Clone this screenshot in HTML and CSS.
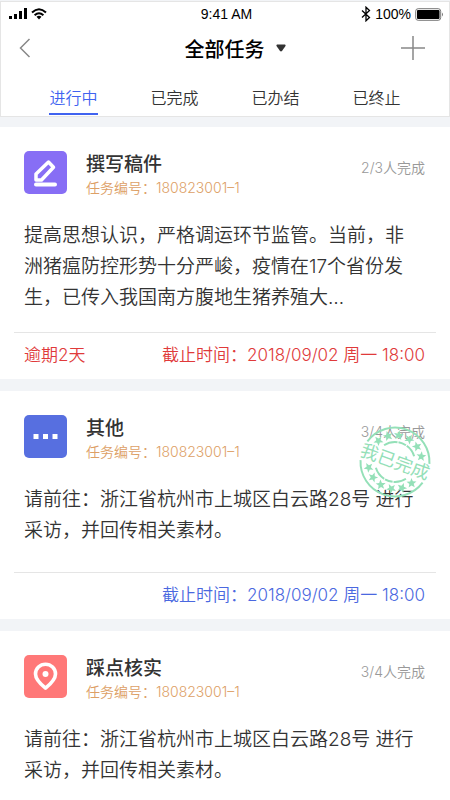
FILE: index.html
```html
<!DOCTYPE html>
<html lang="zh-CN">
<head>
<meta charset="utf-8">
<meta name="viewport" content="width=device-width, initial-scale=1">
<title>全部任务</title>
<link rel="stylesheet" href="styles.css">
</head>
<body>
<header class="top">
  <div class="status">
    <div class="status-left">
      <svg width="18" height="12" viewBox="0 0 18 12"><path d="M0 8h3v3H0zM5 6h3v5H5zM10 3h3v8h-3zM15 0h3v11h-3z"/></svg>
      <svg width="16" height="12" viewBox="0 0 16 12"><g fill="none" stroke="#000" stroke-width="2"><path d="M1 4.500Q8-2 15 4.500M3.600 7.200Q8 3.200 12.400 7.200"/></g><path d="M5.500 8.800Q8 6.800 10.500 8.800L8 11.400z"/></svg>
    </div>
    <span class="clock">9:41 AM</span>
    <div class="status-right">
      <svg width="10" height="16" viewBox="0 0 10 16" fill="none" stroke="#000" stroke-width="1.300"><path d="M1 4.500l7.500 7L5 14.800V1.200l3.500 3.300-7.500 7"/></svg>
      <span>100%</span>
      <svg width="29" height="13" viewBox="0 0 29 13"><rect x=".7" y=".7" width="25" height="11.600" rx="2.500" fill="none" stroke="#777" stroke-width="1"/><rect x="2" y="2" width="22.500" height="9" rx="1"/><path d="M27 4.500q2 2 0 4z" fill="#777"/></svg>
    </div>
  </div>
  <div class="nav">
    <button class="icon-btn" aria-label="返回"><svg width="12" height="20" viewBox="0 0 12 20" fill="none" stroke="#888" stroke-width="1.500"><path d="M10.500 1L1.500 10l9 9"/></svg></button>
    <button class="heading">全部任务<svg width="10" height="8" viewBox="0 0 10 8"><path d="M1 .5h8q1 .5.500 1.500L6 7q-1 .9-2 0L.5 2Q0 1 1 .5z" fill="#333"/></svg></button>
    <button class="icon-btn add" aria-label="新建"><svg width="24" height="24" viewBox="0 0 24 24" fill="none" stroke="#888" stroke-width="1.500"><path d="M12 0v24M0 12h24"/></svg></button>
  </div>
  <nav class="tabs">
    <a href="#" class="tab active">进行中</a>
    <a href="#" class="tab">已完成</a>
    <a href="#" class="tab">已办结</a>
    <a href="#" class="tab">已终止</a>
  </nav>
</header>
<main class="list">
  <article class="card">
    <div class="card-head">
      <svg class="badge" viewBox="0 0 43 43"><rect width="43" height="43" rx="5" fill="#876ef5"/><path d="M12 29v-6L24.500 11l5 5.200L17.500 29z" fill="none" stroke="#fff" stroke-width="3.500" stroke-linejoin="round"/><path d="M12 33.500h19" stroke="#fff" stroke-width="4" stroke-linecap="round"/></svg>
      <div class="names"><h2>撰写稿件</h2><p>任务编号：180823001–1</p></div>
      <span class="count">2/3人完成</span>
    </div>
    <p class="text">提高思想认识，严格调运环节监管。当前，非洲猪瘟防控形势十分严峻，疫情在17个省份发生，已传入我国南方腹地生猪养殖大…</p>
    <div class="foot late"><span>逾期2天</span><span>截止时间：2018/09/02 周一 18:00</span></div>
  </article>
  <article class="card">
    <div class="card-head">
      <svg class="badge" viewBox="0 0 43 43"><rect width="43" height="43" rx="5" fill="#576fe0"/><path d="M9.500 19h5v5h-5zM19 19h5v5h-5zM28.500 19h5v5h-5z" fill="#fff"/></svg>
      <div class="names"><h2>其他</h2><p>任务编号：180823001–1</p></div>
      <span class="count">3/4人完成</span>
    </div>
    <p class="text">请前往：浙江省杭州市上城区白云路28号 进行采访，并回传相关素材。</p>
    <div class="foot"><span>截止时间：2018/09/02 周一 18:00</span></div>
    <svg class="stamp" viewBox="-38 -38 76 76" role="img" aria-label="我已完成">
      <defs><path id="star" d="M0-5L1.400-1.600 5-1.500 2.200.8 3.100 4.300 0 2.300-3.100 4.300-2.200.8-5-1.500-1.400-1.600z"/></defs>
      <g transform="rotate(20)" fill="#94e0b8">
        <g fill="none" stroke="#94e0b8">
          <path d="M-33-10A34.500 34.500 0 0 1 33-10M-33 10A34.500 34.500 0 0 0 33 10" stroke-width="2"/>
          <path d="M-16-12A20 20 0 0 1 16-12M-16 12A20 20 0 0 0 16 12" stroke-width="2" stroke-dasharray="14 1 8 1"/>
        </g>
        <g id="stars">
          <use href="#star" transform="rotate(-58) translate(0 -27)"/>
          <use href="#star" transform="rotate(-35) translate(0 -27)"/>
          <use href="#star" transform="rotate(-12) translate(0 -27)"/>
          <use href="#star" transform="rotate(12) translate(0 -27)"/>
          <use href="#star" transform="rotate(35) translate(0 -27)"/>
          <use href="#star" transform="rotate(58) translate(0 -27)"/>
        </g>
        <use href="#stars" transform="rotate(180)"/>
        <text class="stamp-text" x="0" y="6" text-anchor="middle">我已完成</text>
      </g>
    </svg>
  </article>
  <article class="card">
    <div class="card-head">
      <svg class="badge" viewBox="0 0 43 43"><rect width="43" height="43" rx="5" fill="#ff7878"/><path d="M21.500 33.200Q11.500 25 11.500 19a10 9.800 0 0 1 20 0Q31.500 25 21.500 33.200z" fill="none" stroke="#fff" stroke-width="3.600" stroke-linejoin="round"/><circle cx="21.500" cy="19" r="3" fill="#fff"/></svg>
      <div class="names"><h2>踩点核实</h2><p>任务编号：180823001–1</p></div>
      <span class="count">3/4人完成</span>
    </div>
    <p class="text">请前往：浙江省杭州市上城区白云路28号 进行采访，并回传相关素材。</p>
  </article>
</main>
</body>
</html>
```
FILE: styles.css
```css
* { box-sizing: border-box; }
body {
  margin: 0;
  background: #f2f4f7;
  color: #333;
  font-family: Inter, "Noto Sans CJK SC", sans-serif;
  font-weight: 350;
}
h2, p { margin: 0; }
svg { display: block; flex: none; }
button {
  padding: 0;
  border: 0;
  background: none;
  color: inherit;
  font: inherit;
}
.top {
  margin-top: 1px;
  background: #fff;
  border: 1px solid #e5e5e5;
}
.status {
  display: grid;
  grid-template-columns: 1fr auto 1fr;
  align-items: center;
  height: 24px;
  padding: 0 5px 0 8px;
  color: #000;
  font: 14px/24px "Liberation Sans", sans-serif;
}
.status-left, .status-right { display: flex; align-items: center; gap: 4px; }
.status-right { justify-content: flex-end; }
.nav {
  display: grid;
  grid-template-columns: 1fr auto 1fr;
  align-items: center;
  height: 44px;
  padding: 0 24px 0 18px;
}
.icon-btn { display: flex; }
.add { justify-self: end; }
.heading {
  display: flex;
  align-items: center;
  gap: 11px;
  padding-left: 26px;
  color: #000;
  font-size: 20px;
  font-weight: 500;
}
.tabs {
  display: flex;
  justify-content: space-around;
  height: 46px;
  padding: 0 22px;
}
.tab {
  height: 45px;
  padding-top: 14px;
  color: #333;
  font-size: 16px;
  line-height: 28px;
  text-decoration: none;
}
.active { color: #4063f0; border-bottom: 2px solid #4063f0; }
.list { display: grid; gap: 12px; margin-top: 10px; }
.card { position: relative; padding-top: 24px; background: #fff; }
.card-head {
  display: flex;
  gap: 19px;
  height: 69px;
  padding: 0 25px 0 24px;
}
.badge { width: 43px; height: 43px; }
.names { flex: 1; }
.names h2 { font-size: 19px; font-weight: 500; line-height: 27px; }
.names p { color: #dda066; font-size: 14px; line-height: 20px; }
.count { color: #999; font-size: 14px; line-height: 34px; }
.text {
  min-height: 88px;
  padding: 0 28px 19px 24px;
  font-size: 19px;
  line-height: 31px;
}
.foot {
  display: flex;
  justify-content: flex-end;
  margin: 0 14px;
  padding: 0 11px 2px 10px;
  border-top: 1px solid #e5e5e5;
  color: #4a68e0;
  font-size: 17px;
  line-height: 44px;
}
.late { justify-content: space-between; color: #e03a3a; }
.stamp { position: absolute; top: 33px; right: 17px; width: 76px; height: 76px; }
.stamp-text { font-size: 18px; font-weight: 400; }
```
